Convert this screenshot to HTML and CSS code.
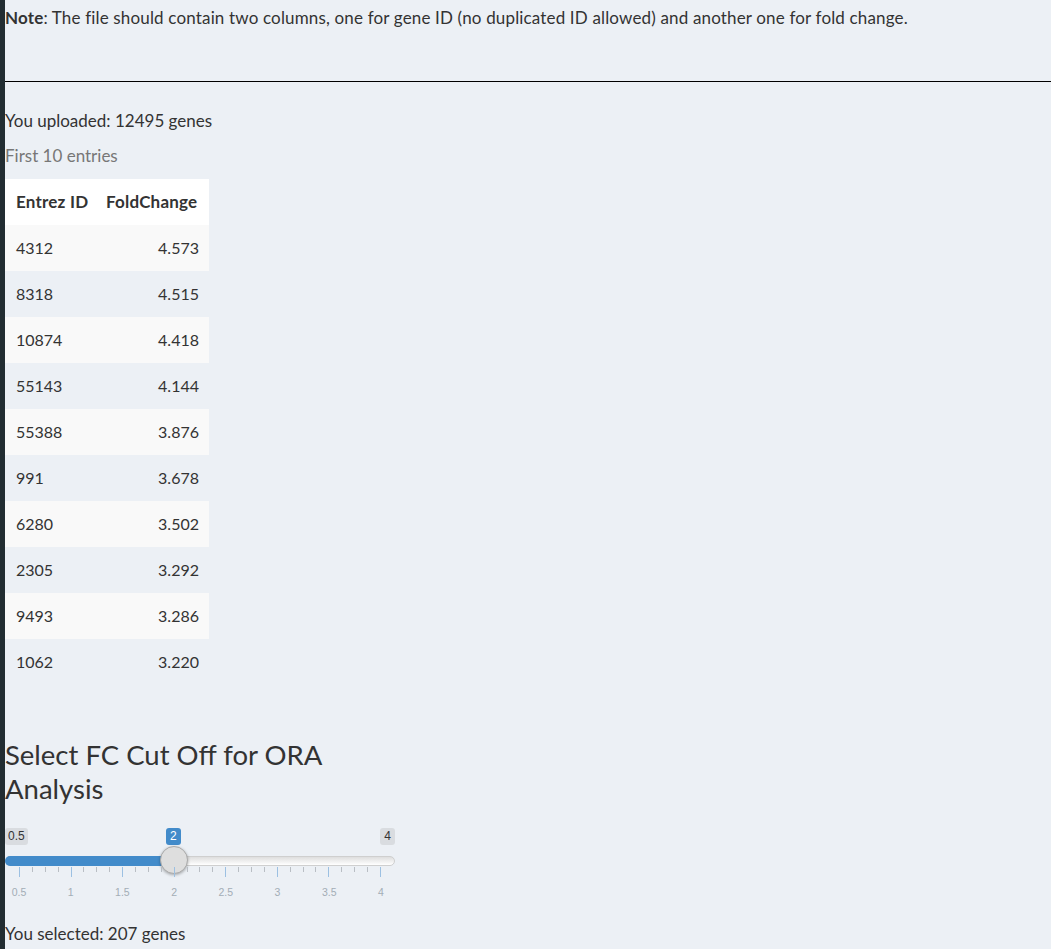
FILE: index.html
```html
<!DOCTYPE html>
<html>
<head>
<meta charset="utf-8">
<link rel="stylesheet" href="styles.css">
</head>
<body>
<div class="layout">
  <div class="sidebar"></div>
  <main class="content">
    <p class="note"><b>Note</b>: The file should contain two columns, one for gene ID (no duplicated ID allowed) and another one for fold change.</p>
    <hr class="rule">
    <p class="uploaded">You uploaded: 12495 genes</p>
    <p class="caption">First 10 entries</p>
    <table class="genes">
      <thead>
        <tr><th class="c-id">Entrez ID</th><th class="c-fc">FoldChange</th></tr>
      </thead>
      <tbody>
        <tr><td>4312</td><td class="num">4.573</td></tr>
        <tr><td>8318</td><td class="num">4.515</td></tr>
        <tr><td>10874</td><td class="num">4.418</td></tr>
        <tr><td>55143</td><td class="num">4.144</td></tr>
        <tr><td>55388</td><td class="num">3.876</td></tr>
        <tr><td>991</td><td class="num">3.678</td></tr>
        <tr><td>6280</td><td class="num">3.502</td></tr>
        <tr><td>2305</td><td class="num">3.292</td></tr>
        <tr><td>9493</td><td class="num">3.286</td></tr>
        <tr><td>1062</td><td class="num">3.220</td></tr>
      </tbody>
    </table>
    <section class="ora">
      <h2 class="ora-title">Select FC Cut Off for ORA Analysis</h2>
      <div class="slider">
        <span class="badge badge-min">0.5</span>
        <span class="badge badge-val">2</span>
        <span class="badge badge-max">4</span>
        <div class="track"></div>
        <div class="fill"></div>
        <div class="handle"></div>
        <div class="grid">
          <div class="ticks">
            <span class="tick major"></span><span class="tick"></span><span class="tick"></span><span class="tick"></span>
            <span class="tick major"></span><span class="tick"></span><span class="tick"></span><span class="tick"></span>
            <span class="tick major"></span><span class="tick"></span><span class="tick"></span><span class="tick"></span>
            <span class="tick major"></span><span class="tick"></span><span class="tick"></span><span class="tick"></span>
            <span class="tick major"></span><span class="tick"></span><span class="tick"></span><span class="tick"></span>
            <span class="tick major"></span><span class="tick"></span><span class="tick"></span><span class="tick"></span>
            <span class="tick major"></span><span class="tick"></span><span class="tick"></span><span class="tick"></span>
            <span class="tick major"></span>
          </div>
          <div class="grid-labels">
            <span>0.5</span><span>1</span><span>1.5</span><span>2</span><span>2.5</span><span>3</span><span>3.5</span><span>4</span>
          </div>
        </div>
      </div>
      <p class="selected">You selected: 207 genes</p>
    </section>
  </main>
</div>
</body>
</html>
```

FILE: styles.css
```css
html, body {
  margin: 0;
  padding: 0;
}

body {
  background: #ecf0f5;
  font-family: "Lato", "Liberation Sans", sans-serif;
  font-size: 17px;
  color: #333;
}

.layout {
  display: flex;
  min-height: 949px;
}

.sidebar {
  width: 5px;
  flex: 0 0 5px;
  background: #222d32;
}

.content {
  flex: 1;
  min-width: 0;
}

.note {
  margin: 7px 0 0;
  line-height: 22px;
  white-space: nowrap;
  letter-spacing: 0.16px;
}

.note b {
  font-weight: 700;
}

.rule {
  margin: 52px 0 0;
  border: 0;
  height: 1px;
  background: #000;
}

.uploaded {
  margin: 28px 0 0;
  line-height: 22px;
}

.caption {
  margin: 13px 0 0;
  line-height: 22px;
  color: #777;
}

.genes {
  margin-top: 12px;
  border-collapse: collapse;
  table-layout: fixed;
  width: 204px;
  font-size: 16px;
}

.genes th,
.genes td {
  height: 46px;
  padding: 0 10px;
  line-height: 22px;
  white-space: nowrap;
  box-sizing: border-box;
}

.genes th {
  background: #fff;
  font-weight: 700;
  font-size: 17px;
  letter-spacing: 0.2px;
  text-align: left;
}

.genes .c-id {
  width: 91px;
  padding-left: 11px;
}

.genes .c-fc {
  width: 113px;
  padding-right: 9px;
}

.genes td:first-child {
  padding-left: 11px;
}

.genes tbody tr:nth-child(odd) td {
  background: #f9f9f9;
}

.genes .num {
  text-align: right;
}

.ora {
  width: 390px;
}

.ora-title {
  margin: 53px 0 0;
  font-size: 27.5px;
  font-weight: 400;
  line-height: 34px;
  color: #333;
}

.slider {
  position: relative;
  height: 100px;
}

.badge {
  position: absolute;
  top: 22px;
  height: 17px;
  line-height: 17px;
  padding: 0 4px;
  font-size: 12px;
  border-radius: 3px;
  background: #d9dce0;
  color: #333;
  font-family: "Liberation Sans", Arial, sans-serif;
}

.badge-min {
  left: 0;
  padding: 0 3px;
}

.badge-max {
  right: 0;
}

.badge-val {
  left: 161px;
  background: #428bca;
  color: #fff;
}

.track {
  position: absolute;
  left: 0;
  right: 0;
  top: 50px;
  height: 10px;
  box-sizing: border-box;
  border: 1px solid #cfcfcf;
  border-radius: 6px;
  background: linear-gradient(to bottom, #dedede, #fff);
}

.fill {
  position: absolute;
  left: 0;
  width: 170px;
  top: 50px;
  height: 10px;
  border-radius: 6px 0 0 6px;
  background: #428bca;
}

.handle {
  position: absolute;
  left: 155px;
  top: 40px;
  width: 28px;
  height: 28px;
  box-sizing: border-box;
  border-radius: 50%;
  border: 1px solid #aaa;
  background: #dedede;
  box-shadow: 0 1px 3px rgba(0, 0, 0, 0.3);
}

.grid {
  position: absolute;
  left: 14px;
  right: 14px;
  top: 61px;
}

.ticks {
  display: flex;
  justify-content: space-between;
  height: 10px;
  align-items: flex-start;
}

.tick {
  width: 1px;
  height: 5px;
  background: #b9bec4;
}

.tick.major {
  height: 10px;
  background: #9cc0e2;
}

.grid-labels {
  display: flex;
  justify-content: space-between;
  margin: 9px -10px 0;
  font-family: "Liberation Sans", Arial, sans-serif;
  font-size: 10.5px;
  color: #a3adb6;
}

.grid-labels span {
  width: 20px;
  text-align: center;
}

.selected {
  margin: 17px 0 0;
  line-height: 22px;
}
```
